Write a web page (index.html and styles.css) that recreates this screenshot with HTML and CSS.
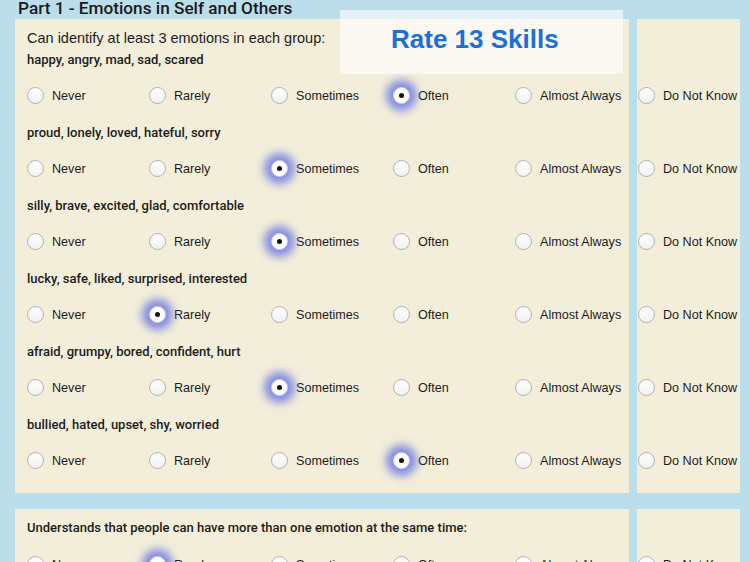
FILE: index.html
```html
<!DOCTYPE html>
<html>
<head>
<meta charset="utf-8">
<link rel="stylesheet" href="styles.css">
</head>
<body>
<h1 class="title">Part 1 - Emotions in Self and Others</h1>
<div class="tooltip">Rate 13 Skills</div>

<section class="block">
  <div class="card main">
    <p class="question">Can identify at least 3 emotions in each group:</p>

    <div class="group">
      <div class="label">happy, angry, mad, sad, scared</div>
      <div class="options">
        <label class="opt"><span class="radio"></span>Never</label>
        <label class="opt"><span class="radio"></span>Rarely</label>
        <label class="opt"><span class="radio"></span>Sometimes</label>
        <label class="opt"><span class="radio on"></span>Often</label>
        <label class="opt"><span class="radio"></span>Almost Always</label>
      </div>
    </div>

    <div class="group">
      <div class="label">proud, lonely, loved, hateful, sorry</div>
      <div class="options">
        <label class="opt"><span class="radio"></span>Never</label>
        <label class="opt"><span class="radio"></span>Rarely</label>
        <label class="opt"><span class="radio on"></span>Sometimes</label>
        <label class="opt"><span class="radio"></span>Often</label>
        <label class="opt"><span class="radio"></span>Almost Always</label>
      </div>
    </div>

    <div class="group">
      <div class="label">silly, brave, excited, glad, comfortable</div>
      <div class="options">
        <label class="opt"><span class="radio"></span>Never</label>
        <label class="opt"><span class="radio"></span>Rarely</label>
        <label class="opt"><span class="radio on"></span>Sometimes</label>
        <label class="opt"><span class="radio"></span>Often</label>
        <label class="opt"><span class="radio"></span>Almost Always</label>
      </div>
    </div>

    <div class="group">
      <div class="label">lucky, safe, liked, surprised, interested</div>
      <div class="options">
        <label class="opt"><span class="radio"></span>Never</label>
        <label class="opt"><span class="radio on"></span>Rarely</label>
        <label class="opt"><span class="radio"></span>Sometimes</label>
        <label class="opt"><span class="radio"></span>Often</label>
        <label class="opt"><span class="radio"></span>Almost Always</label>
      </div>
    </div>

    <div class="group">
      <div class="label">afraid, grumpy, bored, confident, hurt</div>
      <div class="options">
        <label class="opt"><span class="radio"></span>Never</label>
        <label class="opt"><span class="radio"></span>Rarely</label>
        <label class="opt"><span class="radio on"></span>Sometimes</label>
        <label class="opt"><span class="radio"></span>Often</label>
        <label class="opt"><span class="radio"></span>Almost Always</label>
      </div>
    </div>

    <div class="group">
      <div class="label">bullied, hated, upset, shy, worried</div>
      <div class="options">
        <label class="opt"><span class="radio"></span>Never</label>
        <label class="opt"><span class="radio"></span>Rarely</label>
        <label class="opt"><span class="radio"></span>Sometimes</label>
        <label class="opt"><span class="radio on"></span>Often</label>
        <label class="opt"><span class="radio"></span>Almost Always</label>
      </div>
    </div>
  </div>

  <div class="card side">
    <div class="question-spacer"></div>
    <div class="group"><div class="label"></div><div class="options"><label class="opt"><span class="radio"></span>Do Not Know</label></div></div>
    <div class="group"><div class="label"></div><div class="options"><label class="opt"><span class="radio"></span>Do Not Know</label></div></div>
    <div class="group"><div class="label"></div><div class="options"><label class="opt"><span class="radio"></span>Do Not Know</label></div></div>
    <div class="group"><div class="label"></div><div class="options"><label class="opt"><span class="radio"></span>Do Not Know</label></div></div>
    <div class="group"><div class="label"></div><div class="options"><label class="opt"><span class="radio"></span>Do Not Know</label></div></div>
    <div class="group"><div class="label"></div><div class="options"><label class="opt"><span class="radio"></span>Do Not Know</label></div></div>
  </div>
</section>

<section class="block">
  <div class="card main">
    <div class="group">
      <div class="label first">Understands that people can have more than one emotion at the same time:</div>
      <div class="options">
        <label class="opt"><span class="radio"></span>Never</label>
        <label class="opt"><span class="radio on"></span>Rarely</label>
        <label class="opt"><span class="radio"></span>Sometimes</label>
        <label class="opt"><span class="radio"></span>Often</label>
        <label class="opt"><span class="radio"></span>Almost Always</label>
      </div>
    </div>
  </div>
  <div class="card side">
    <div class="group">
      <div class="label first"></div>
      <div class="options"><label class="opt"><span class="radio"></span>Do Not Know</label></div>
    </div>
  </div>
</section>
</body>
</html>
```

FILE: styles.css
```css
html, body {
  margin: 0;
  padding: 0;
}
body {
  background: #bcdeea;
  font-family: "Liberation Sans", Arial, sans-serif;
  color: #1c1c1c;
  width: 750px;
  height: 562px;
  overflow: hidden;
  position: relative;
}
.title {
  font-family: Roboto, "Liberation Sans", sans-serif;
  font-size: 17.2px;
  font-weight: 500;
  line-height: 19px;
  height: 19px;
  margin: -1px 0 1px 18px;
  color: #1a1a1a;
}
.block {
  display: grid;
  grid-template-columns: 614px 103px;
  column-gap: 8px;
  margin: 0 0 16px 15px;
}
.card {
  background: #f3eeda;
  padding: 8px 0 5px 12px;
}
.card.side {
  padding-left: 1px;
}
.question {
  margin: 0;
  font-size: 14.5px;
  line-height: 23px;
}
.question-spacer {
  height: 23px;
}
.label {
  font-family: Roboto, "Liberation Sans", sans-serif;
  font-size: 13px;
  font-weight: 500;
  line-height: 18px;
  height: 18px;
  padding-top: 1px;
  margin-bottom: -1px;
  white-space: nowrap;
}
.label.first {
  padding-top: 2px;
  margin-bottom: 0;
}
.options {
  display: grid;
  grid-template-columns: repeat(5, 122px);
  align-items: center;
  height: 55px;
}
.side .options {
  grid-template-columns: 102px;
}
.opt {
  display: flex;
  align-items: center;
  gap: 8px;
  font-size: 12.6px;
  white-space: nowrap;
}
.radio {
  width: 15px;
  height: 15px;
  border-radius: 50%;
  border: 1px solid #b0b0b0;
  background: linear-gradient(#ffffff, #f1f1f1);
  flex: none;
  position: relative;
}
.radio.on {
  box-shadow: 0 0 9px 7px rgba(115, 126, 226, 0.88);
  border-color: #c9c9e8;
  background: #ffffff;
}
.radio.on::after {
  content: "";
  position: absolute;
  left: 5px;
  top: 5px;
  width: 5px;
  height: 5px;
  border-radius: 50%;
  background: #111;
}
.tooltip {
  position: absolute;
  left: 340px;
  top: 10px;
  width: 232px;
  height: 50px;
  padding: 14px 0 0 51px;
  background: rgba(255, 255, 255, 0.6);
  color: #1a6fd8;
  font-size: 26px;
  font-weight: bold;
  line-height: 30px;
  z-index: 2;
}
```
